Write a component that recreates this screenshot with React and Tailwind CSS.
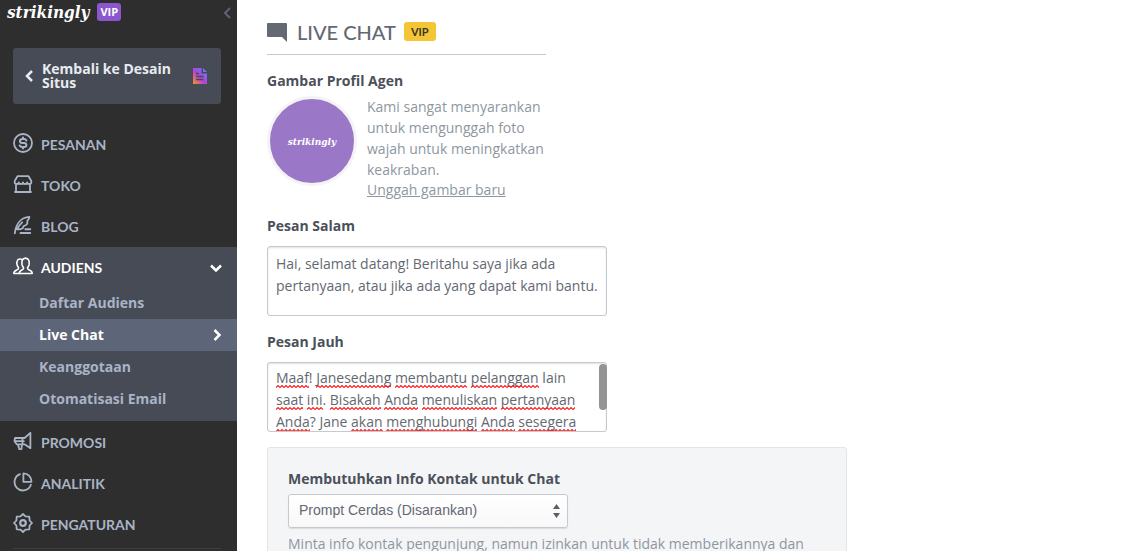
const stroke = {
  fill: "none",
  stroke: "currentColor",
  strokeWidth: 1.8,
  strokeLinecap: "round",
  strokeLinejoin: "round",
};

function Icon({ children }) {
  return (
    <svg viewBox="0 0 20 20" className="mb-1 size-5 shrink-0" aria-hidden="true" {...stroke}>
      {children}
    </svg>
  );
}

const CoinIcon = () => (
  <Icon>
    <circle cx="10" cy="10" r="9" />
    <path d="M13.400 7.500c-.4-.9-1.200-1.400-2.300-1.400H9.200c-1.400 0-2.300.8-2.300 1.900s.9 1.900 2.300 1.900h1.900c1.400 0 2.300.8 2.300 2s-.9 2-2.300 2H9.200c-1.200 0-2.100-.5-2.500-1.400M10 4.400v1.700M10 13.900v1.700" strokeWidth="2" />
  </Icon>
);

const ShopIcon = () => (
  <Icon>
    <path d="M4.500 2.200h11L18.300 7v1.200c0 1.200-1 1.800-2 1.800s-2-.6-2.100-1.700c-.1 1.100-1.100 1.700-2.100 1.700S10.100 9.400 10 8.300C9.900 9.400 9 10 8 10S5.900 9.400 5.800 8.300C5.700 9.400 4.800 10 3.700 10c-1 0-2-.6-2-1.800V7zM3 10.300v7.500M17 10.300v7.500M2 18h16" />
  </Icon>
);

const QuillIcon = () => (
  <Icon>
    <path d="M1.800 18.400C2.800 9.500 7.500 2.300 16.400 1.800c-.1 1.700-.8 3-2 4l-.1 3c-.9 1.300-2.200 1.900-3.700 2.300L9.700 13.300c-1.700.9-4 1.300-6.200.9M4.500 13.600C5.800 11 7.300 9 9.200 7.300" />
    <path d="M12.400 14.200h4.800M7.500 18h9.700" strokeWidth="2" />
  </Icon>
);

const PeopleIcon = () => (
  <Icon>
    <path d="M6.300 17.500h12.900c0-2.300-1.300-2.900-3-3.500-1.200-.4-1.700-.9-1.700-1.900 0-.8 1.200-1.500 1.600-3.400.5-3-.2-6.600-3.600-6.600S8.500 5.700 9 8.700c.4 1.900 1.600 2.600 1.600 3.400 0 1-.5 1.500-1.700 1.900-1.600.6-2.600 1.200-2.600 3.500z" strokeWidth="1.600" />
    <path d="M8.700 3.400C7.900 2.900 5.500 2.700 4.600 4.200 3.700 5.700 3.800 8 4.300 9.400c.4 1.200 1.300 1.900 1.300 2.700 0 1-.6 1.500-1.800 1.900-1.600.6-3 1.200-3 3.500h5.500" strokeWidth="1.600" />
  </Icon>
);

const MegaphoneIcon = () => (
  <Icon>
    <path d="M17.400 1.800v15.400L11.600 13.300H3.800L1.500 10.200 2 7h9.600l5.800-5.200M9.500 7v6.300M1.800 10.200h9M4.900 13.300l1.400 4.900h2.200l.4-4.900" />
  </Icon>
);

const PieIcon = () => (
  <Icon>
    <path d="M7 2.200a8.400 8.400 0 1 0 10.900 10.600M10.400 1.400v8.400h8.100c0-4.900-3.300-8.400-8.100-8.400z" />
  </Icon>
);

const GearIcon = () => (
  <Icon>
    <path d="M10 1 12.500 3.400 16.300 3.700 16.600 7.500 19 10 16.600 12.500 16.300 16.300 12.500 16.600 10 19 7.500 16.600 3.700 16.300 3.400 12.500 1 10 3.400 7.500 3.700 3.700 7.500 3.400z" />
    <circle cx="10" cy="10" r="2.800" strokeWidth="2.200" />
  </Icon>
);

function Chevron({ className, d }) {
  return (
    <svg viewBox="0 0 12 12" className={`shrink-0 ${className}`} fill="none" stroke="currentColor" aria-hidden="true">
      <path d={d} />
    </svg>
  );
}
const LEFT = "M9 1 4 6l5 5";
const RIGHT = "M3.500 1l5 5-5 5";
const DOWN = "M1 3.500l5 5 5-5";

function NavItem({ icon, children }) {
  return (
    <a href="#" className="flex h-[41px] items-center gap-2 pl-[13px] font-[Lato,sans-serif] text-sm font-bold text-[#a9b4c6]">
      {icon}
      <span>{children}</span>
    </a>
  );
}

function SubItem({ active, children }) {
  return (
    <a
      href="#"
      aria-current={active ? "page" : undefined}
      className={`flex h-8 items-center justify-between pr-[14px] pl-[39px] text-sm font-bold ${active ? "bg-[#5d6678] text-white" : "text-[#a9b4c6]"}`}
    >
      {children}
      {active && <Chevron className="size-3 stroke-[2.5]" d={RIGHT} />}
    </a>
  );
}

function Sidebar() {
  return (
    <nav className="w-[237px] shrink-0 bg-[#2e2e2e]">
      <div className="flex h-12 items-start justify-between pl-[7px] pr-1">
        <div className="flex items-start gap-2">
          <span className="font-['DejaVu_Serif_Condensed','DejaVu_Serif',serif] text-[17px] leading-6 font-bold text-white italic">strikingly</span>
          <span className="mt-[3px] h-[18px] rounded-[3px] bg-[#8d56cf] px-[3px] text-[11px] leading-[18px] font-bold text-white">VIP</span>
        </div>
        <button type="button" aria-label="Tutup menu" className="pt-[7px] text-[#5d6475]">
          <Chevron className="size-3 stroke-2" d={LEFT} />
        </button>
      </div>
      <a href="#" className="mr-4 ml-[13px] flex h-14 items-center rounded-[3px] bg-[#474b56] pr-[13px] pl-[10px] text-sm leading-[14px] font-bold text-[#e8ebf0]">
        <Chevron className="size-3 stroke-[2.5]" d={LEFT} />
        <span className="ml-[7px] flex-1">Kembali ke Desain Situs</span>
        <svg viewBox="0 0 16 16" className="size-4" aria-hidden="true">
          <defs>
            <linearGradient id="doc" x1="0" y1="1" x2="1" y2="0">
              <stop offset="0" stopColor="#f7941e" />
              <stop offset=".45" stopColor="#b840d8" />
              <stop offset="1" stopColor="#4c8dff" />
            </linearGradient>
          </defs>
          <path fill="url(#doc)" d="M1 0h8.500v5.500H15V16H1z M11 0l4 4h-4z" />
          <path stroke="#474b56" strokeWidth="1.300" fill="none" d="M4 5.500h3M4 8.500h7.500M4 11.500h7.500" />
        </svg>
      </a>
      <div className="mt-5">
        <NavItem icon={<CoinIcon />}>PESANAN</NavItem>
        <NavItem icon={<ShopIcon />}>TOKO</NavItem>
        <NavItem icon={<QuillIcon />}>BLOG</NavItem>
      </div>
      <div className="bg-[#474b56] pb-[6px]">
        <button type="button" aria-expanded="true" className="flex h-10 w-full items-center gap-2 pt-px pr-[15px] pl-[13px] font-[Lato,sans-serif] text-sm font-bold text-white">
          <PeopleIcon />
          <span className="flex-1 text-left">AUDIENS</span>
          <Chevron className="size-3 stroke-[2.5]" d={DOWN} />
        </button>
        <SubItem>Daftar Audiens</SubItem>
        <SubItem active>Live Chat</SubItem>
        <SubItem>Keanggotaan</SubItem>
        <SubItem>Otomatisasi Email</SubItem>
      </div>
      <div className="pt-px">
        <NavItem icon={<MegaphoneIcon />}>PROMOSI</NavItem>
        <NavItem icon={<PieIcon />}>ANALITIK</NavItem>
        <NavItem icon={<GearIcon />}>PENGATURAN</NavItem>
      </div>
      <hr className="mt-[3px] mr-4 ml-[13px] border-[#3f3f3f]" />
    </nav>
  );
}

const labelClass = "block text-sm leading-5 font-bold text-[#4b505a]";
const areaClass =
  "block h-[70px] w-full resize-none overflow-hidden rounded-[3px] border border-[#c6c9cd] pr-1 pl-2 text-sm leading-[22px] text-[#636972] shadow-[inset_0_1px_2px_rgba(0,0,0,0.12)]";

const AWAY = [
  ["Maaf", true], ["! ", false], ["Janesedang", true], [" ", false], ["membantu", true], [" ", false],
  ["pelanggan", true], [" lain ", false], ["saat", true], [" ", false], ["ini", true], [". ", false],
  ["Bisakah", true], [" ", false], ["Anda", true], [" ", false], ["menuliskan", true], [" ", false],
  ["pertanyaan", true], [" ", false], ["Anda", true], ["? Jane ", false], ["akan", true], [" ", false],
  ["menghubungi", true], [" ", false], ["Anda", true], [" ", false], ["sesegera", true],
];

function AwayMessage() {
  return (
    <div className="relative mt-[10px]">
      <textarea id="away" spellCheck={false} defaultValue={AWAY.map(([t]) => t).join("")} className={`${areaClass} pt-1 pr-4`} />
      <div aria-hidden="true" className="pointer-events-none absolute inset-0 overflow-hidden border border-transparent pt-1 pr-4 pl-2 text-sm leading-[22px] text-transparent">
        {AWAY.map(([t, marked], i) =>
          marked ? (
            <span key={i} className="bg-[url('data:image/svg+xml,%3Csvg%20xmlns=%22http://www.w3.org/2000/svg%22%20width=%224%22%20height=%223%22%3E%3Cpath%20d=%22M-1%201.500L0%202.500L2%200.500L4%202.500L5%201.500%22%20fill=%22none%22%20stroke=%22%23ff1a1a%22%20stroke-width=%221.100%22/%3E%3C/svg%3E')] bg-bottom-left bg-repeat-x pb-px">{t}</span>
          ) : (
            t
          ),
        )}
      </div>
      <div className="absolute top-[2px] right-0 h-[46px] w-2 rounded-full bg-[#949494]" />
    </div>
  );
}

function Main() {
  return (
    <main className="min-w-0 flex-1 bg-white pt-5 pr-8 pl-[30px]">
      <header className="flex h-[35px] max-w-[279px] items-start border-b border-[#c6c9d1]">
        <svg viewBox="0 0 20 19" className="mt-[3px] h-[19px] w-5" fill="#636972" aria-hidden="true">
          <path d="M1 0h18q1 0 1 1v18l-5-5H1q-1 0-1-1V1q0-1 1-1z" />
        </svg>
        <h1 className="ml-[10px] font-[Lato,sans-serif] text-xl leading-6 font-medium text-[#636972]">LIVE CHAT</h1>
        <span className="mt-[2px] ml-2 h-[19px] rounded-[3px] bg-[#f4c636] px-[7px] font-[Lato,sans-serif] text-[11px] leading-[19px] font-bold text-[#3b3626]">VIP</span>
      </header>

      <h2 className={`mt-4 ${labelClass}`}>Gambar Profil Agen</h2>
      <div className="mt-[5px] flex gap-[10px]">
        <div className="flex size-[90px] shrink-0 items-center justify-center rounded-full border-[3px] border-[#f4f4f5] bg-[#9b77c7]">
          <span className="font-['DejaVu_Serif_Condensed','DejaVu_Serif',serif] text-[10px] font-bold text-white italic">strikingly</span>
        </div>
        <div className="w-[190px] text-sm leading-[21px] text-[#8e979f]">
          <p>Kami sangat menyarankan untuk mengunggah foto wajah untuk meningkatkan keakraban.</p>
          <a href="#" className="block leading-5 underline">Unggah gambar baru</a>
        </div>
      </div>

      <div className="mt-4 max-w-[340px]">
        <label htmlFor="greeting" className={labelClass}>Pesan Salam</label>
        <textarea
          id="greeting"
          spellCheck={false}
          defaultValue="Hai, selamat datang! Beritahu saya jika ada pertanyaan, atau jika ada yang dapat kami bantu."
          className={`${areaClass} mt-[10px] pt-[6px]`}
        />
        <label htmlFor="away" className={`mt-4 ${labelClass}`}>Pesan Jauh</label>
        <AwayMessage />
      </div>

      <section className="mt-[15px] max-w-[580px] rounded-[3px] border border-[#e2e4e7] bg-[#f4f5f7] px-5 pt-[21px] pb-5">
        <label htmlFor="contact" className={labelClass}>Membutuhkan Info Kontak untuk Chat</label>
        <div className="relative mt-[5px] max-w-[280px]">
          <select
            id="contact"
            className="block h-[34px] w-full appearance-none rounded-[3px] border border-[#c6c9cd] bg-linear-to-b from-white to-[#f8f8f8] pb-[2px] pl-[10px] font-['Liberation_Sans',sans-serif] text-sm text-[#636972] shadow-[0_1px_1px_rgba(0,0,0,0.1)]"
          >
            <option>Prompt Cerdas (Disarankan)</option>
          </select>
          <svg viewBox="0 0 7 14" className="pointer-events-none absolute top-[10px] right-2 h-[14px] w-[7px]" fill="#5a606a" aria-hidden="true">
            <path d="M3.500 0 7 5H0zM3.500 14 0 9h7z" />
          </svg>
        </div>
        <p className="mt-[5px] text-sm leading-[22px] text-[#8e979f]">Minta info kontak pengunjung, namun izinkan untuk tidak memberikannya dan</p>
      </section>
    </main>
  );
}

export default function App() {
  return (
    <div className="flex min-h-screen bg-white font-['Open_Sans',sans-serif]">
      <Sidebar />
      <Main />
    </div>
  );
}
